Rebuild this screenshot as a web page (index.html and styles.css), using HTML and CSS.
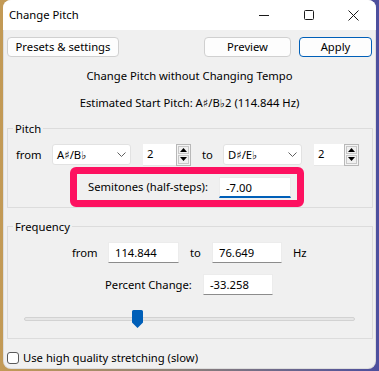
FILE: index.html
```html
<!DOCTYPE html>
<html>
<head>
<meta charset="utf-8">
<link rel="stylesheet" href="styles.css">
</head>
<body>
<div class="window">
  <div class="titlebar">
    <span class="title">Change Pitch</span>
    <div class="controls">
      <span class="ctl"><svg width="10" height="10" viewBox="0 0 10 10"><path d="M0 5.5H10" stroke="#1a1a1a" stroke-width="1"/></svg></span>
      <span class="ctl"><svg width="10" height="10" viewBox="0 0 10 10"><rect x="0.5" y="0.5" width="9" height="9" rx="1" fill="none" stroke="#1a1a1a" stroke-width="1"/></svg></span>
      <span class="ctl"><svg width="11" height="11" viewBox="0 0 11 11"><path d="M0.5 0.5L10.5 10.5M10.5 0.5L0.5 10.5" stroke="#1a1a1a" stroke-width="1"/></svg></span>
    </div>
  </div>
  <div class="content">
    <div class="toprow">
      <span class="btn presets">Presets &amp; settings</span>
      <span class="spacer"></span>
      <span class="btn preview">Preview</span>
      <span class="btn apply">Apply</span>
    </div>
    <p class="info first">Change Pitch without Changing Tempo</p>
    <p class="info">Estimated Start Pitch: A♯/B♭2 (114.844 Hz)</p>

    <div class="group">
      <span class="gtitle">Pitch</span>
      <div class="row pitchrow">
        <span class="lbl from">from</span>
        <span class="combo"><span class="ctext">A♯/B♭</span><svg class="chev" width="9" height="5" viewBox="0 0 9 5"><path d="M0.5 0.5L4.5 4.5L8.5 0.5" fill="none" stroke="#606060" stroke-width="1"/></svg></span>
        <span class="spin s1"><span class="stext">2</span><span class="sbtns"><span class="sb"><svg width="7" height="4" viewBox="0 0 7 4"><path d="M0 4L3.5 0L7 4Z" fill="#000"/></svg></span><span class="sb"><svg width="7" height="4" viewBox="0 0 7 4"><path d="M0 0L3.5 4L7 0Z" fill="#000"/></svg></span></span></span>
        <span class="lbl to">to</span>
        <span class="combo"><span class="ctext">D♯/E♭</span><svg class="chev" width="9" height="5" viewBox="0 0 9 5"><path d="M0.5 0.5L4.5 4.5L8.5 0.5" fill="none" stroke="#606060" stroke-width="1"/></svg></span>
        <span class="spin s2"><span class="stext">2</span><span class="sbtns"><span class="sb"><svg width="7" height="4" viewBox="0 0 7 4"><path d="M0 4L3.5 0L7 4Z" fill="#000"/></svg></span><span class="sb"><svg width="7" height="4" viewBox="0 0 7 4"><path d="M0 0L3.5 4L7 0Z" fill="#000"/></svg></span></span></span>
      </div>
      <div class="hl">
        <span class="hl-label">Semitones (half-steps):</span>
        <span class="input focus">-7.00</span>
      </div>
    </div>

    <div class="group freq">
      <span class="gtitle">Frequency</span>
      <div class="row freqrow">
        <span class="lbl ffrom">from</span>
        <span class="input w71">114.844</span>
        <span class="lbl fto">to</span>
        <span class="input w70">76.649</span>
        <span class="lbl hz">Hz</span>
      </div>
      <div class="row pctrow">
        <span class="lbl pct">Percent Change:</span>
        <span class="input w70">-33.258</span>
      </div>
      <div class="slider">
        <div class="track"></div>
        <svg class="thumb" width="11" height="18" viewBox="0 0 11 18"><path d="M1.5 0H9.5A1.5 1.5 0 0 1 11 1.5V12.5L5.5 18L0 12.5V1.5A1.5 1.5 0 0 1 1.5 0Z" fill="#005fb8"/></svg>
      </div>
    </div>

    <div class="check"><span class="box"></span><span>Use high quality stretching (slow)</span></div>
  </div>
</div>
</body>
</html>
```
FILE: styles.css
```css
* { box-sizing: border-box; }
html, body { margin: 0; padding: 0; }
body {
  width: 379px;
  height: 371px;
  overflow: hidden;
  background: linear-gradient(to right, #c39a55 0%, #8a7f7a 50%, #4d4f9e 100%);
  font-family: "Noto Sans", "DejaVu Sans", sans-serif;
  font-size: 11.25px;
  color: #000;
}
.window {
  margin-left: 3px;
  width: 373px;
  height: 369px;
  background: #f0f0f0;
  border-radius: 8px;
  overflow: hidden;
  box-shadow: inset 0 0 0 1px rgba(0,0,0,0.08);
}
.titlebar {
  height: 30px;
  background: #fff;
  display: flex;
  align-items: center;
}
.title {
  padding-left: 6px;
  line-height: 16px;
  flex: 1;
}
.controls { display: flex; height: 30px; }
.ctl {
  width: 45px;
  height: 30px;
  display: flex;
  align-items: center;
  justify-content: center;
}
.content { padding: 0 4px; }
.toprow {
  margin-top: 7px;
  display: flex;
  height: 20px;
}
.spacer { flex: 1; }
.btn {
  height: 20px;
  line-height: 18px;
  text-align: center;
  background: #fdfdfd;
  border: 1px solid #d0d0d0;
  border-radius: 4px;
}
.presets { width: 112px; }
.preview { width: 87px; margin-right: 8px; }
.apply { width: 73px; border-color: #005fb8; }
.info {
  margin: 11px 0 0 0;
  line-height: 16px;
  text-align: center;
}
.group {
  margin-top: 17px;
  margin-right: -1px;
  border: 1px solid #dcdcdc;
  display: flex;
  flex-direction: column;
}
.group.freq { margin-top: 18px; padding-bottom: 10px; }
.gtitle {
  align-self: flex-start;
  margin: -8px 0 0 5px;
  padding: 0 2px;
  line-height: 15px;
  background: #f0f0f0;
}
.row {
  display: flex;
  align-items: center;
  height: 21px;
  margin-top: 8px;
}
.lbl { line-height: 16px; }
.pitchrow { padding-left: 8px; }
.from { width: 36px; }
.to { width: 21px; margin-left: 11px; }
.combo {
  width: 79px;
  height: 21px;
  background: #fff;
  border: 1px solid #e2e2e2;
  border-radius: 3px;
  display: flex;
  align-items: center;
  padding: 0 4px 0 4px;
}
.ctext { flex: 1; line-height: 16px; }
.spin {
  height: 22px;
  margin-left: 12px;
  display: flex;
}
.s1 { width: 48px; }
.s2 { width: 45px; }
.stext {
  flex: 1;
  background: #fff;
  line-height: 20px;
  padding-left: 4px;
  border-bottom: 1px solid #e6e6e6;
}
.sbtns {
  width: 15px;
  display: flex;
  flex-direction: column;
  border: 1px solid #b8b8b8;
  background: #f4f4f4;
  padding: 1px;
  gap: 1px;
}
.sb {
  flex: 1;
  display: flex;
  align-items: center;
  justify-content: center;
  background: #f0f0f0;
  border: 1px solid #c8c8c8;
}
.hl {
  margin: 2px 0 0 62px;
  width: 234px;
  height: 40px;
  border: 7px solid #fd1160;
  border-radius: 6px;
  display: flex;
  align-items: center;
  padding-left: 11px;
}
.hl-label { flex: 1; line-height: 16px; }
.input {
  height: 21px;
  background: #fff;
  border: 1px solid #ececec;
  border-bottom-color: #8c8c8c;
  line-height: 19px;
  padding-left: 6px;
}
.input.focus {
  width: 72px;
  margin-right: 6px;
  border-bottom: 2px solid #005fb8;
}
.w71 { width: 71px; }
.w70 { width: 70px; }
.freqrow { padding-left: 64px; }
.ffrom { width: 36px; }
.fto { width: 22px; margin-left: 11px; }
.hz { margin-left: 11px; }
.pctrow { margin-top: 11px; padding-left: 97px; }
.pct { width: 98px; }
.slider {
  position: relative;
  margin: 15px 0 0 16px;
  width: 331px;
  height: 18px;
  padding-top: 7px;
}
.track {
  height: 4px;
  background: #e6e6e6;
  border: 1px solid #d2d2d2;
  border-radius: 2px;
}
.thumb {
  position: absolute;
  left: 108px;
  top: 0;
}
.check {
  margin-top: 11px;
  display: flex;
  align-items: center;
  line-height: 16px;
  gap: 4px;
}
.box {
  width: 12px;
  height: 12px;
  background: #fff;
  border: 1px solid #5a5a5a;
  border-radius: 3px;
}
```
